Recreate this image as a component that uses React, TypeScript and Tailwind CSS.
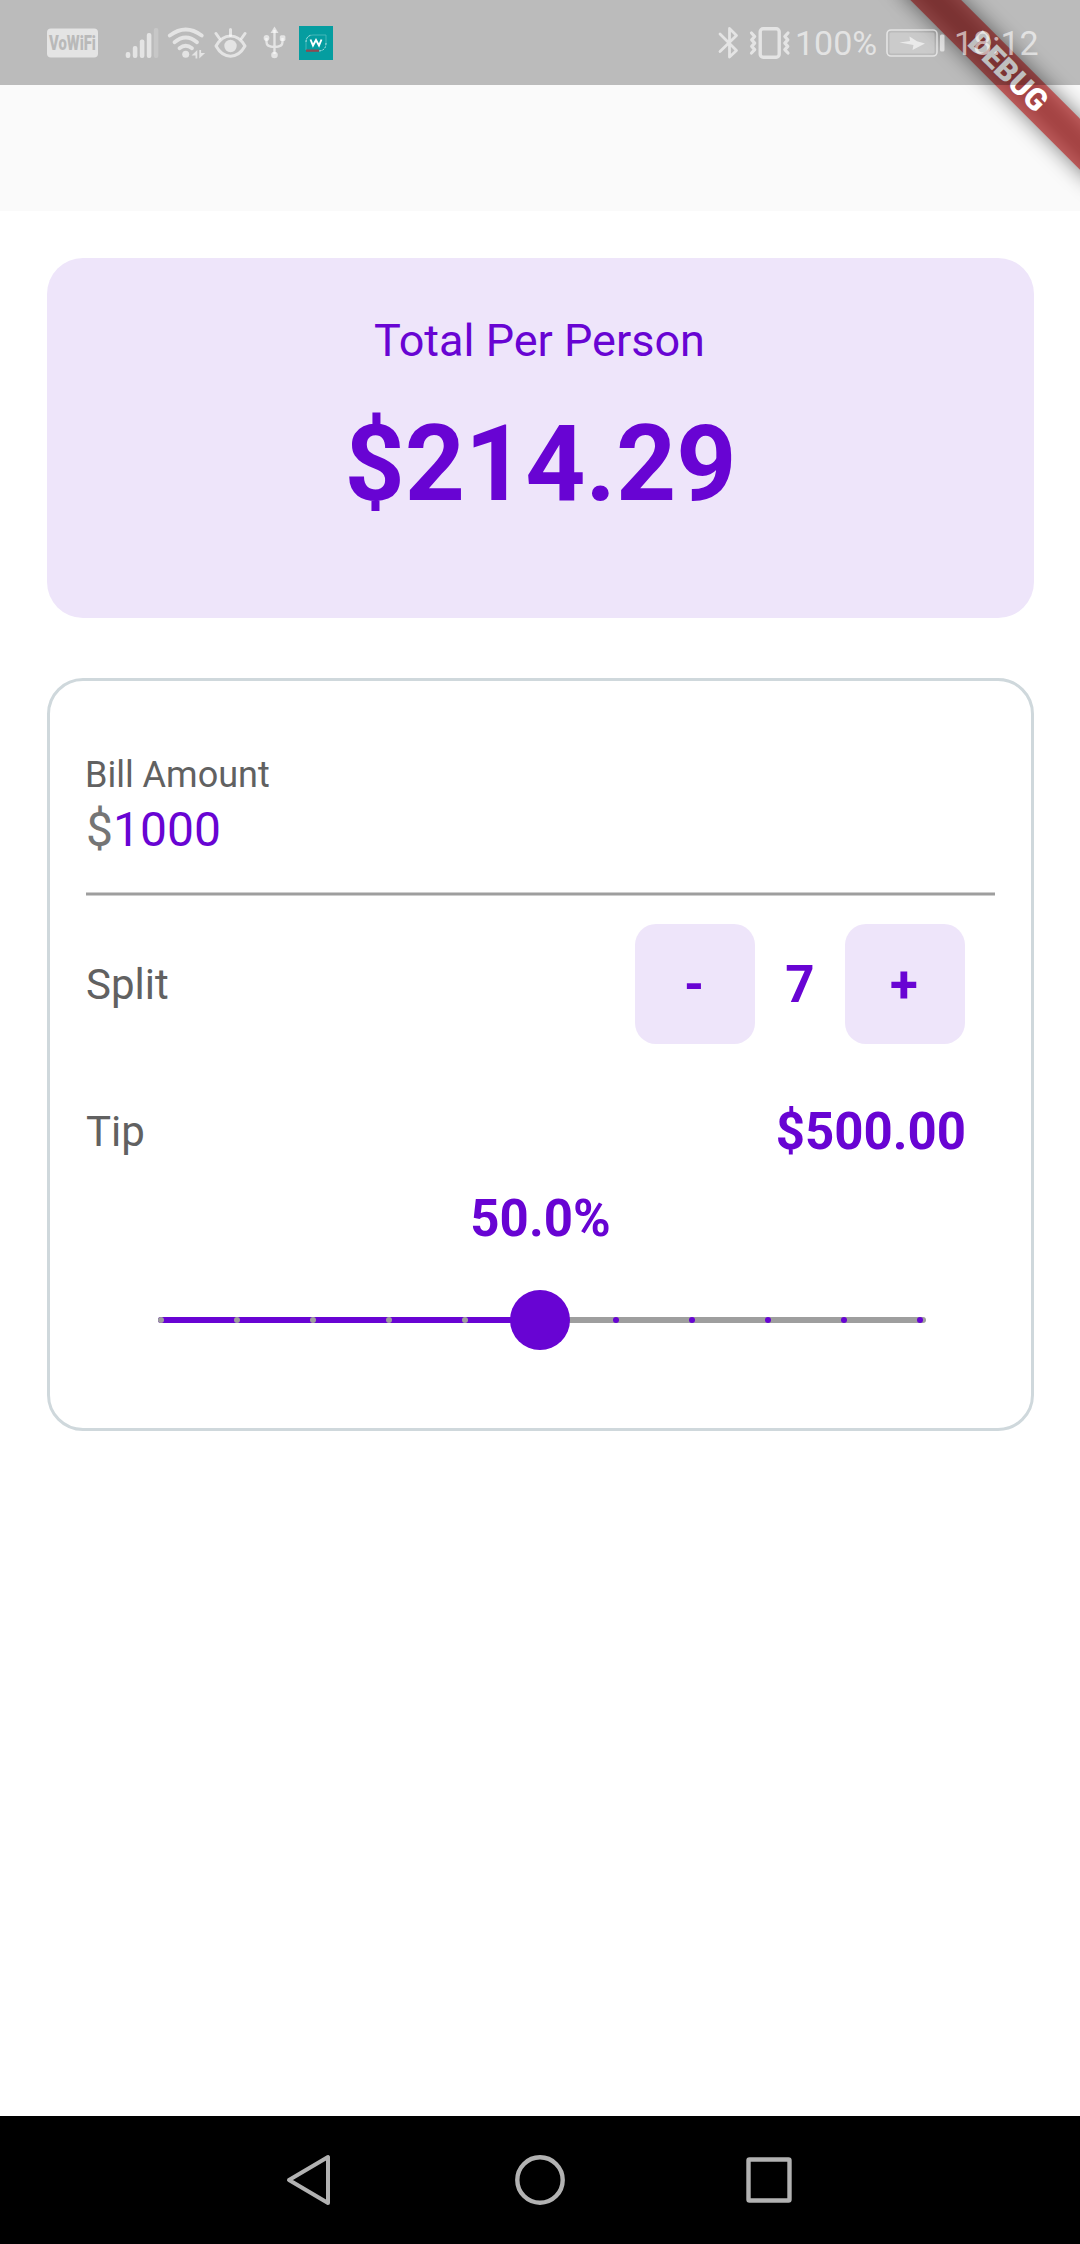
const ticks = [0, 1, 2, 3, 4, 5, 6, 7, 8, 9, 10];

function DebugBanner() {
  return (
    <div className="pointer-events-none absolute inset-x-0 top-0 h-[320px] overflow-hidden">
      <div className="absolute top-0 right-0 h-0 w-0 rotate-45">
        <div className="absolute top-[84px] left-[-140px] h-9 w-[280px] bg-black/50 blur-[10.9px]" />
        <div className="absolute top-[84px] left-[-120px] flex h-9 w-60 items-center justify-center bg-[#b71c1ca0] text-[30.6px] leading-none font-black text-white">
          DEBUG
        </div>
      </div>
    </div>
  );
}

function StatusBar() {
  return (
    <div className="absolute inset-x-0 top-0 flex h-[85px] items-center bg-black/25 text-white/60">
      <svg className="ml-[47px] h-[30px] w-[51px]" viewBox="0 0 51 30">
        <rect width="51" height="29" y="0.5" rx="4" fill="currentColor" />
        <g transform="translate(25.5 21.8) scale(0.74 1)">
          <text textAnchor="middle" fontSize="20" fontWeight="900" fill="#b9b9b9">
            VoWiFi
          </text>
        </g>
      </svg>
      <svg className="ml-[27px] h-[32px] w-[34px]" viewBox="0 0 34 32" fill="currentColor">
        <rect x="0.7" y="25" width="4.6" height="6" rx="2" />
        <rect x="7.8" y="19" width="4.6" height="12" rx="2" />
        <rect x="14.8" y="12.500" width="4.6" height="18.500" rx="2" />
        <rect x="21.800" y="6" width="4.6" height="25" rx="2" />
        <rect x="28.800" y="1" width="4.6" height="30" rx="2" opacity="0.3" />
      </svg>
      <svg className="ml-[8px] h-[32px] w-[39px]" viewBox="0 0 39 32" fill="none" stroke="currentColor" strokeWidth="3.8" strokeLinecap="round">
        <path d="M2.800 8.500Q18.700 -3.500 34.700 8.500" />
        <path d="M7.500 15.300Q18.700 5.700 30 15.300" />
        <path d="M12.500 21.300Q18.700 16.200 25 21.300" />
        <circle cx="18.700" cy="27.300" r="3.500" fill="currentColor" stroke="none" />
        <path d="M30.300 23v8.500h-1.800v-3h-4zM32.300 31.500v-8.500h1.800v3h4z" fill="currentColor" stroke="none" />
      </svg>
      <svg className="ml-[8px] h-[32px] w-[34px]" viewBox="0 0 34 32" fill="none" stroke="currentColor" strokeWidth="3" strokeLinecap="round" strokeLinejoin="round">
        <path d="M2 19C9.500 5.500 23.500 5.500 31 19C23.500 32.500 9.500 32.500 2 19Z" />
        <circle cx="16.500" cy="19" r="6.200" fill="currentColor" stroke="none" />
        <path d="M16.500 2.500v6M2 6.500l3.500 5M31 6.500l-3.500 5" />
      </svg>
      <svg className="ml-[15px] h-[33px] w-[23px]" viewBox="0 0 23 33" fill="none" stroke="currentColor" strokeWidth="2.4">
        <path d="M11.500 4v24M3.500 12v4q0 5 8 5q8 0 8-5v-4" />
        <path d="M11.500 0.500l4 6.500h-8z" fill="currentColor" stroke="none" />
        <circle cx="11.500" cy="29" r="3.300" fill="currentColor" stroke="none" />
        <circle cx="3.500" cy="12" r="2.900" fill="currentColor" stroke="none" />
        <rect x="16.800" y="9.300" width="5.600" height="5.600" rx="1.500" fill="currentColor" stroke="none" />
      </svg>
      <svg className="ml-[13px] h-[34px] w-[34px]" viewBox="0 0 34 34" fill="none">
        <rect width="34" height="34" fill="#059da0" />
        <path d="M7 24V16Q7 9 14 9H27V17" stroke="#4dbabb" strokeWidth="0.9" />
        <path d="M27 17Q27 25 19 25" stroke="#c8ecec" strokeWidth="1" strokeDasharray="2 1.200" />
        <path d="M7 16Q7 11 12 9" stroke="#bfe8e8" strokeWidth="0.800" strokeDasharray="2 1.200" />
        <path d="M11.500 13.500l2.500 6 3-5.500 3 5.500 2.500-6" stroke="#fff" strokeWidth="1.900" />
        <rect x="7" y="23.500" width="13" height="2.300" fill="#8c4a52" />
      </svg>

      <svg className="ml-auto h-[34px] w-[22px]" viewBox="0 0 22 34" fill="none" stroke="currentColor" strokeWidth="2.800" strokeLinejoin="round" strokeLinecap="round">
        <path d="M2 8L18.500 24.500L11.500 31V2.500L18.500 9.500L2 25.500" />
      </svg>
      <svg className="ml-[9px] h-[34px] w-[42px]" viewBox="0 0 42 34" fill="none" stroke="currentColor" strokeWidth="3.200" strokeLinejoin="round" strokeLinecap="round">
        <rect x="11.200" y="2.700" width="19" height="28.500" rx="3" strokeWidth="3.400" />
        <path d="M2.500 7l3.200 3.500-3 3.300 3 3.300-3 3.300 3 3.300L2.500 27" />
        <path d="M39 7l-3.200 3.500 3 3.300-3 3.300 3 3.300-3 3.300L39 27" />
      </svg>
      <span className="ml-[4px] w-[84px] text-[34px] leading-none whitespace-nowrap">100%</span>
      <svg className="ml-[7px] h-[30px] w-[60px]" viewBox="0 0 60 30" fill="none">
        <rect x="1" y="2" width="50" height="26" rx="4" stroke="currentColor" strokeWidth="1.600" />
        <rect x="3.500" y="4.500" width="45" height="21" rx="1.500" fill="currentColor" opacity="0.400" />
        <rect x="54" y="6.500" width="4.500" height="17" rx="1.500" fill="currentColor" />
        <path d="M23.500 8.500l7.500 4.800 8 2.200-12.500 6.500 1-5-14-2.500 10.500-1.500z" fill="currentColor" />
      </svg>
      <span className="mr-[42px] ml-[8px] w-[84px] text-[34px] leading-none whitespace-nowrap">18:12</span>
    </div>
  );
}

function StepButton({ label }: { label: string }) {
  return (
    <button className="flex h-[120px] w-[120px] items-center justify-center rounded-[21px] bg-[#eee5fa] pt-0.5 pr-0.5 text-[51px] leading-[60px] font-bold text-[#6804d3]">
      {label}
    </button>
  );
}

function TipSlider() {
  return (
    <div className="relative mt-[41px] ml-[72px] h-[60px] w-[768px]">
      <div className="absolute top-[27px] left-0 h-1.5 w-[768px] rounded-full bg-[#9e9e9e]" />
      <div className="absolute top-[27px] left-0 h-1.5 w-[383px] rounded-l-full bg-[#6804d3]" />
      {ticks.map((t) => (
        <div
          key={t}
          className={`absolute top-[27px] h-1.5 w-1.5 rounded-full ${t < 5 ? "bg-[#9e9e9e]" : "bg-[#6804d3]"}`}
          style={{ left: t * 75.9 }}
        />
      ))}
      <div className="absolute top-0 left-[352px] h-[60px] w-[60px] rounded-full bg-[#6804d3]" />
    </div>
  );
}

function NavBar() {
  return (
    <div className="flex h-32 items-center bg-black">
      <svg className="ml-[285px] h-[56px] w-[48px]" viewBox="0 0 48 56" fill="none" stroke="#b2b2b2" strokeWidth="4" strokeLinejoin="round">
        <path d="M4 28L43 5V51Z" />
      </svg>
      <svg className="ml-[181px] h-[52px] w-[52px]" viewBox="0 0 52 52" fill="none" stroke="#b2b2b2" strokeWidth="4.400">
        <circle cx="26" cy="26" r="22.700" />
      </svg>
      <svg className="ml-[179px] h-[48px] w-[48px]" viewBox="0 0 48 48" fill="none" stroke="#b2b2b2" strokeWidth="4.400" strokeLinejoin="round">
        <rect x="3.500" y="3.500" width="41" height="41" rx="1" />
      </svg>
    </div>
  );
}

export default function App() {
  return (
    <div className="relative flex h-[2244px] w-[1080px] flex-col overflow-hidden bg-white font-[Roboto,sans-serif] text-[#6804d3]">
      <header className="h-[211px] bg-[#fafafa]" />

      <main className="flex flex-1 flex-col pr-[46px] pl-[47px]">
        <section className="mt-[47px] flex h-[360px] flex-col items-center rounded-[36px] bg-[#eee5fa] pt-[56px]">
          <h2 className="pr-0.5 text-[45px] leading-[53px]">Total Per Person</h2>
          <p className="mt-9 text-[105px] leading-[123px] font-bold">$214.29</p>
        </section>

        <section className="mt-[60px] flex h-[753px] flex-col rounded-[36px] border-[3px] border-[#cfd8dc] px-9">
          <label className="-ml-px mt-[73px] text-[36px] leading-[42px] text-[#616161]">Bill Amount</label>
          <div className="mt-[6px] text-[48px] leading-[56px]">
            <span className="text-[#757575]">$</span>1000
          </div>
          <div className="mt-[34px] h-1 border-y border-[#cecece] bg-[#9e9e9e]" />

          <div className="mt-7 flex items-center justify-between pr-[30px]">
            <span className="pt-0.5 text-[42px] leading-[60px] text-[#616161]">Split</span>
            <div className="flex items-center">
              <StepButton label="-" />
              <span className="w-[90px] pt-0.5 text-center text-[51px] leading-[60px] font-bold">7</span>
              <StepButton label="+" />
            </div>
          </div>

          <div className="mt-[58px] flex h-[60px] items-center justify-between pr-[29px]">
            <span className="text-[42px] leading-[60px] text-[#616161]">Tip</span>
            <span className="text-[51px] leading-[60px] font-bold">$500.00</span>
          </div>
          <div className="mt-[27px] text-center text-[51px] leading-[60px] font-bold">50.0%</div>
          <TipSlider />
        </section>
      </main>

      <NavBar />
      <DebugBanner />
      <StatusBar />
    </div>
  );
}
